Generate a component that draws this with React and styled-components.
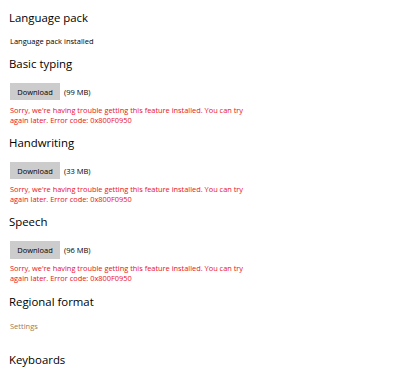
import React from "react";
import styled, { createGlobalStyle } from "styled-components";

const Global = createGlobalStyle`
  body {
    margin: 0;
    background: #fff;
    font-family: "Open Sans", "Noto Sans", sans-serif;
  }
`;

const Page = styled.div`
  width: 400px;
  height: 375px;
  overflow: hidden;
  padding: 9.9px 0 0 9px;
  box-sizing: border-box;
  color: #000;
`;

const Heading = styled.h2`
  margin: 0;
  font-size: 11.4px;
  font-weight: 400;
  line-height: 16px;
`;

const Section = styled.section`
  margin-bottom: ${(p) => p.gap || 0}px;
`;

const Note = styled.div`
  margin-top: 10.4px;
  padding-left: 1px;
  font-size: 7.5px;
  line-height: 10px;
`;

const Row = styled.div`
  display: flex;
  align-items: center;
  gap: 4px;
  margin-top: 10.6px;
  padding-left: 1px;
`;

const Button = styled.button`
  width: 50px;
  height: 17.5px;
  border: none;
  background: #cccccc;
  font-family: inherit;
  font-size: 7.5px;
  color: #000;
  padding: 0;
`;

const Size = styled.span`
  font-size: 7.5px;
`;

const Error = styled.p`
  margin: 4.2px 0 0;
  padding-left: 1px;
  width: 245px;
  font-size: 7.4px;
  line-height: 10px;
  color: #e81123;
`;

const Link = styled.a`
  display: block;
  margin-top: 11.2px;
  padding-left: 1px;
  font-size: 7.5px;
  line-height: 10px;
  color: #a07a50;
  text-decoration: none;
`;

const ERROR =
  "Sorry, we're having trouble getting this feature installed. You can try again later. Error code: 0x800F0950";

const features = [
  { name: "Basic typing", size: "99 MB" },
  { name: "Handwriting", size: "33 MB" },
  { name: "Speech", size: "96 MB" },
];

export default function App() {
  return (
    <Page>
      <Global />
      <Section gap={10}>
        <Heading>Language pack</Heading>
        <Note>Language pack installed</Note>
      </Section>
      {features.map((f) => (
        <Section key={f.name} gap={10.8}>
          <Heading>{f.name}</Heading>
          <Row>
            <Button>Download</Button>
            <Size>({f.size})</Size>
          </Row>
          <Error>{ERROR}</Error>
        </Section>
      ))}
      <Section gap={21}>
        <Heading>Regional format</Heading>
        <Link>Settings</Link>
      </Section>
      <Heading>Keyboards</Heading>
    </Page>
  );
}
